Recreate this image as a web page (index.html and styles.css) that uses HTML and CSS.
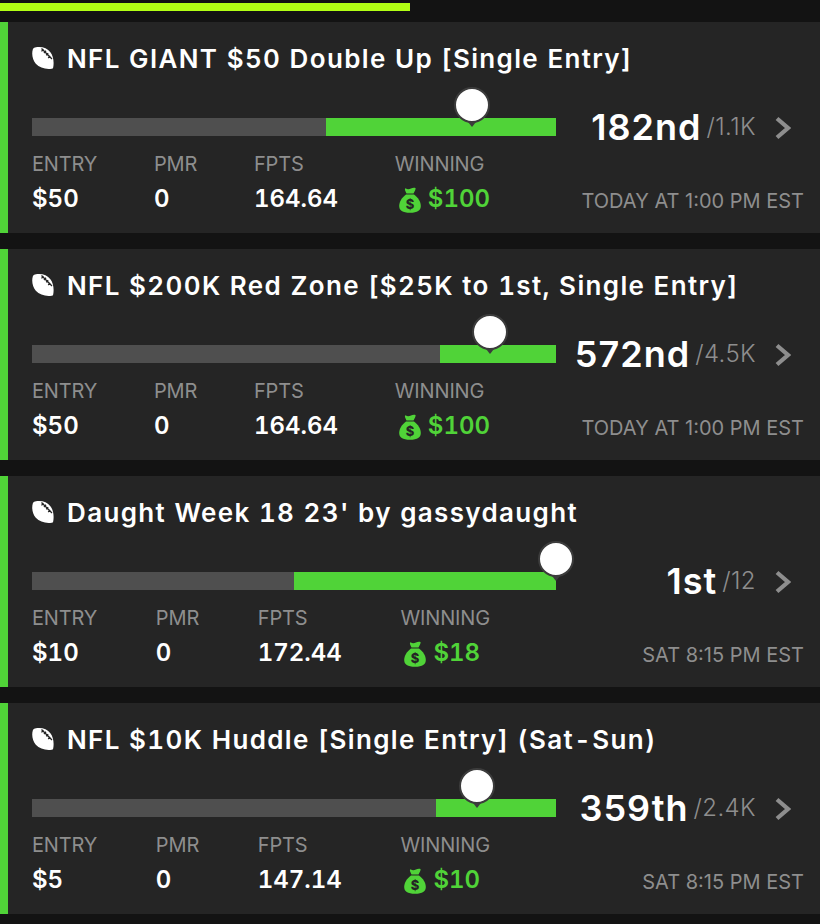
FILE: index.html
```html
<!DOCTYPE html>
<html lang="en">
<head>
    <meta charset="UTF-8">
    <meta name="viewport" content="width=device-width, initial-scale=1.0">
    <title>My Contests</title>
    <link rel="stylesheet" href="styles.css">
</head>
<body>
    <div class="top-progress"></div>

    <svg class="defs" width="0" height="0">
        <defs>
            <symbol id="football" viewBox="0 0 22 22">
                <path d="M3 .6C9-.8 15 .8 18.4 5.2 21.4 9 22.2 15 21.2 20.4 21 21.200 20.400 21.600 19.600 21.700 13.500 22.500 7.500 20.800 3.800 16.800 .6 13.200-.6 7 .8 2.600 1.100 1.500 1.900 .9 3 .6Z" fill="#fff"/>
                <path d="M9.500 1.500 20 12M11.500 2.200l-2 2.200M14 3.800l-2 2.200M16.200 6.200l-2 2M18.200 9l-2 2" fill="none" stroke="#252525" stroke-width="1.300"/>
            </symbol>
            <symbol id="money-bag" viewBox="0 0 22 26">
                <path d="M6.500 1.200C8.500 2.600 10 2.400 12 1.400 13.500.6 16 .4 16.600 1.200 17 2 15.500 4.400 14.500 6.400L7.500 6.400C6.800 4.600 5 2 6.500 1.200Z" fill="#50d338"/>
                <path d="M7 7.600H15C19 10.600 21.800 15 21.800 19 21.800 23.400 18.500 25.800 11 25.800S.2 23.400.2 19C.2 15 3 10.600 7 7.600Z" fill="#50d338"/>
                <text x="11" y="21.500" text-anchor="middle" class="bag-sign">$</text>
            </symbol>
            <symbol id="chevron" viewBox="0 0 16 24">
                <path d="M2 2.500 13 12 2 21.500" fill="none" stroke="#8e8e8e" stroke-width="4.200"/>
            </symbol>
        </defs>
    </svg>

    <div class="contest-list">
        <div class="contest">
            <h2 class="contest-title"><svg class="ball"><use href="#football"/></svg>NFL GIANT $50 Double Up [Single Entry]</h2>
            <div class="contest-body">
                <div class="contest-main">
                    <div class="bar">
                        <div class="bar-fill" style="width: 230px"></div>
                        <div class="marker" style="left: 440px"></div>
                    </div>
                    <div class="stats">
                        <div class="stat"><span class="label">ENTRY</span><span class="value">$50</span></div>
                        <div class="stat"><span class="label">PMR</span><span class="value">0</span></div>
                        <div class="stat"><span class="label">FPTS</span><span class="value">164.64</span></div>
                        <div class="stat"><span class="label">WINNING</span><span class="value win"><svg class="bag"><use href="#money-bag"/></svg>$100</span></div>
                    </div>
                </div>
                <div class="contest-side">
                    <div class="rank"><span class="place">182nd</span><span class="field">/1.1K</span><svg class="chevron"><use href="#chevron"/></svg></div>
                    <div class="start-time">TODAY AT 1:00 PM EST</div>
                </div>
            </div>
        </div>

        <div class="contest">
            <h2 class="contest-title"><svg class="ball"><use href="#football"/></svg>NFL $200K Red Zone [$25K to 1st, Single Entry]</h2>
            <div class="contest-body">
                <div class="contest-main">
                    <div class="bar">
                        <div class="bar-fill" style="width: 116px"></div>
                        <div class="marker" style="left: 458px"></div>
                    </div>
                    <div class="stats">
                        <div class="stat"><span class="label">ENTRY</span><span class="value">$50</span></div>
                        <div class="stat"><span class="label">PMR</span><span class="value">0</span></div>
                        <div class="stat"><span class="label">FPTS</span><span class="value">164.64</span></div>
                        <div class="stat"><span class="label">WINNING</span><span class="value win"><svg class="bag"><use href="#money-bag"/></svg>$100</span></div>
                    </div>
                </div>
                <div class="contest-side">
                    <div class="rank"><span class="place">572nd</span><span class="field">/4.5K</span><svg class="chevron"><use href="#chevron"/></svg></div>
                    <div class="start-time">TODAY AT 1:00 PM EST</div>
                </div>
            </div>
        </div>

        <div class="contest">
            <h2 class="contest-title"><svg class="ball"><use href="#football"/></svg>Daught Week 18 23' by gassydaught</h2>
            <div class="contest-body">
                <div class="contest-main">
                    <div class="bar">
                        <div class="bar-fill" style="width: 262px"></div>
                        <div class="marker" style="left: 524px"></div>
                    </div>
                    <div class="stats">
                        <div class="stat"><span class="label">ENTRY</span><span class="value">$10</span></div>
                        <div class="stat"><span class="label">PMR</span><span class="value">0</span></div>
                        <div class="stat"><span class="label">FPTS</span><span class="value">172.44</span></div>
                        <div class="stat"><span class="label">WINNING</span><span class="value win"><svg class="bag"><use href="#money-bag"/></svg>$18</span></div>
                    </div>
                </div>
                <div class="contest-side">
                    <div class="rank"><span class="place">1st</span><span class="field">/12</span><svg class="chevron"><use href="#chevron"/></svg></div>
                    <div class="start-time">SAT 8:15 PM EST</div>
                </div>
            </div>
        </div>

        <div class="contest">
            <h2 class="contest-title"><svg class="ball"><use href="#football"/></svg>NFL $10K Huddle [Single Entry] (Sat-Sun)</h2>
            <div class="contest-body">
                <div class="contest-main">
                    <div class="bar">
                        <div class="bar-fill" style="width: 120px"></div>
                        <div class="marker" style="left: 445px"></div>
                    </div>
                    <div class="stats">
                        <div class="stat"><span class="label">ENTRY</span><span class="value">$5</span></div>
                        <div class="stat"><span class="label">PMR</span><span class="value">0</span></div>
                        <div class="stat"><span class="label">FPTS</span><span class="value">147.14</span></div>
                        <div class="stat"><span class="label">WINNING</span><span class="value win"><svg class="bag"><use href="#money-bag"/></svg>$10</span></div>
                    </div>
                </div>
                <div class="contest-side">
                    <div class="rank"><span class="place">359th</span><span class="field">/2.4K</span><svg class="chevron"><use href="#chevron"/></svg></div>
                    <div class="start-time">SAT 8:15 PM EST</div>
                </div>
            </div>
        </div>
    </div>
</body>
</html>
```

FILE: styles.css
```css
* {
    margin: 0;
    padding: 0;
    box-sizing: border-box;
}

body {
    font-family: Inter, "Liberation Sans", sans-serif;
    background: #131313;
    color: #fff;
    height: 924px;
    overflow: hidden;
    padding-top: 3px;
}

.defs {
    position: absolute;
}

.top-progress {
    width: 410px;
    height: 8px;
    background: #b2ff14;
    margin-bottom: 11px;
}

.contest-list {
    display: flex;
    flex-direction: column;
    gap: 16px;
}

.contest {
    height: 211px;
    background: #252525;
    border-left: 8px solid #50d338;
    padding: 20px 16px 0 24px;
}

.contest-title {
    display: flex;
    align-items: center;
    height: 32px;
    font-size: 26px;
    font-weight: 600;
    font-feature-settings: "tnum";
    letter-spacing: 1.35px;
    white-space: nowrap;
}

.ball {
    width: 22px;
    height: 22px;
    margin-right: 13px;
    flex-shrink: 0;
}

.contest-body {
    display: flex;
    margin-top: 44px;
}

.contest-main {
    width: 524px;
    flex-shrink: 0;
}

.bar {
    position: relative;
    height: 18px;
    background: #4f4f4f;
}

.bar-fill {
    position: absolute;
    right: 0;
    top: 0;
    height: 100%;
    background: #50d338;
}

.marker {
    position: absolute;
    top: -31px;
    width: 36px;
    height: 36px;
    margin-left: -18px;
    background: #fff;
    border: 2px solid #3c3c3c;
    border-radius: 50%;
}

.marker::after {
    content: "";
    position: absolute;
    left: 50%;
    bottom: -6px;
    margin-left: -4px;
    border-left: 4px solid transparent;
    border-right: 4px solid transparent;
    border-top: 5px solid #3c3c3c;
}

.stats {
    display: flex;
    justify-content: space-between;
    width: 458px;
    margin-top: 16px;
}

.stat {
    display: flex;
    flex-direction: column;
}

.label {
    font-size: 20px;
    line-height: 24px;
    letter-spacing: -.15px;
    color: #8e8e8e;
}

.value {
    display: flex;
    align-items: center;
    margin-top: 9px;
    font-size: 24px;
    line-height: 28px;
    font-weight: 600;
    font-feature-settings: "tnum";
}

.win {
    color: #50d338;
}

.bag {
    width: 22px;
    height: 26px;
    margin: 1px 7px 0 4px;
}

.bag-sign {
    font-size: 13px;
    font-weight: 800;
    fill: #252525;
}

.contest-side {
    flex: 1;
    display: flex;
    flex-direction: column;
    align-items: flex-end;
}

.rank {
    display: flex;
    align-items: center;
    height: 18px;
    line-height: 18px;
    white-space: nowrap;
}

.place {
    font-size: 36px;
    font-weight: 600;
    letter-spacing: 1px;
}

.field {
    margin-left: 5px;
    font-size: 24px;
    font-weight: 300;
    letter-spacing: .4px;
    color: #8e8e8e;
}

.chevron {
    width: 16px;
    height: 24px;
    margin: 2px 13px 0 19px;
}

.start-time {
    margin-top: 53px;
    font-size: 20px;
    line-height: 24px;
    color: #8e8e8e;
    white-space: nowrap;
}
```
